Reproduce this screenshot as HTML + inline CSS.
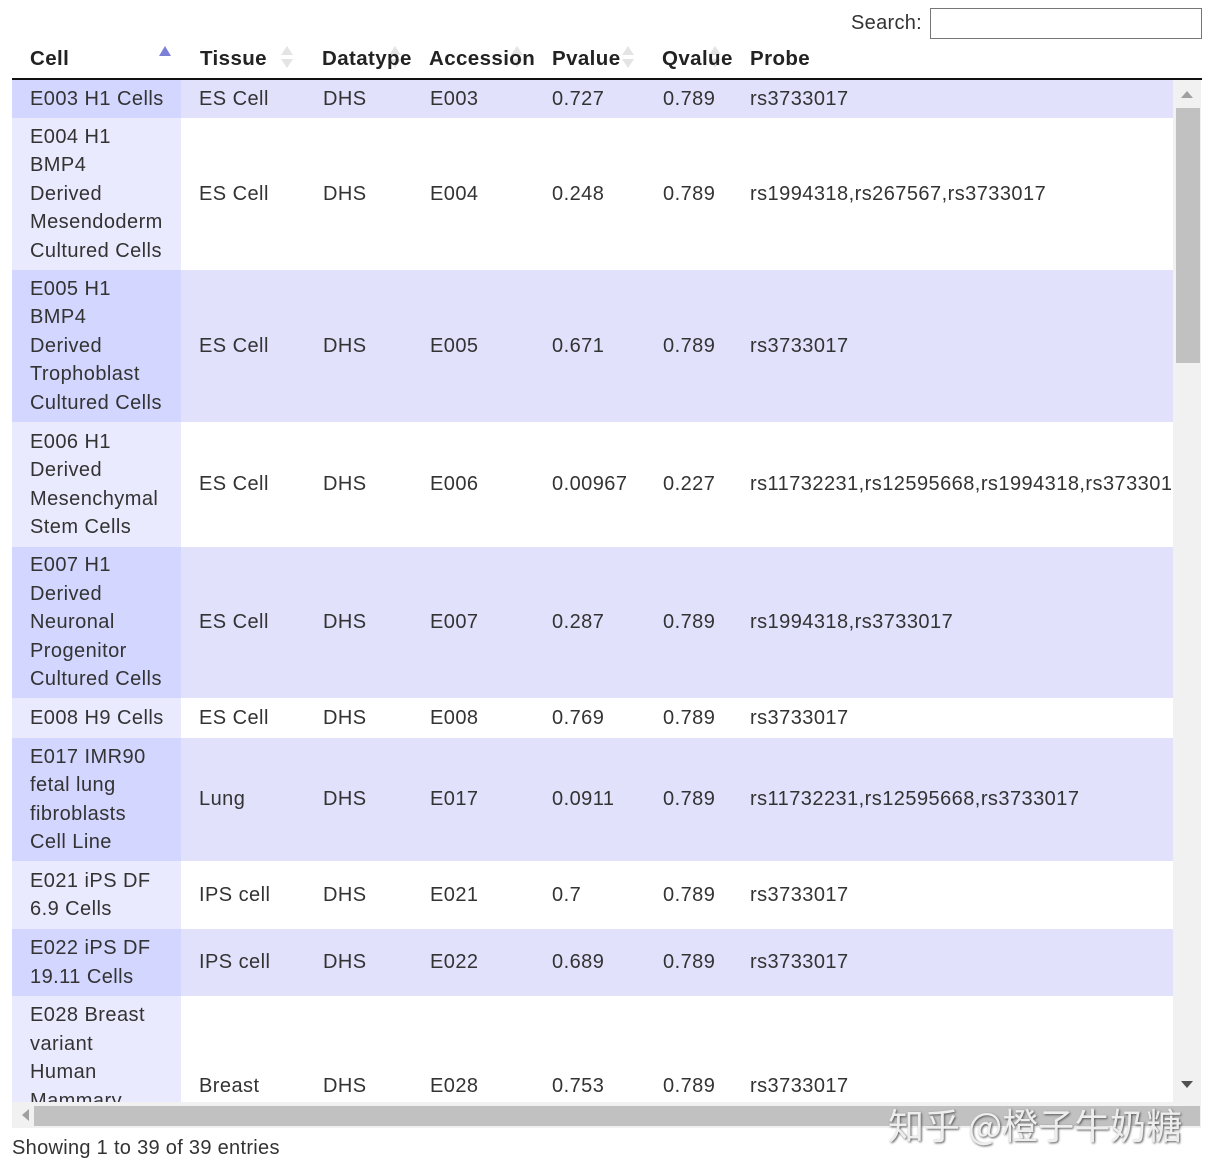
<!DOCTYPE html>
<html><head><meta charset="utf-8"><style>
body{margin:0;width:1217px;height:1171px;background:#fff;font-family:"Liberation Sans",Arial,sans-serif;color:#333;position:relative;overflow:hidden}
.search{position:absolute;left:851px;top:12px;font-size:20px;letter-spacing:0.3px}
.sbox{position:absolute;left:930px;top:8px;width:272px;height:31px;border:1px solid #767676;box-sizing:border-box}
.hdr{position:absolute;top:47px;font-size:20.5px;font-weight:bold;color:#222;letter-spacing:0.4px}
.hline{position:absolute;left:12px;top:78px;width:1190px;height:2px;background:#111}
.wrap{position:absolute;left:12px;top:80px;width:1161px;height:1022px;overflow:hidden}
table{border-collapse:collapse;table-layout:fixed;width:1400px;font-size:20px;line-height:28.5px;letter-spacing:0.45px}
td{padding:0 0 0 18px;vertical-align:middle;white-space:nowrap;overflow:hidden}
tr.o td{background:#e1e1fc}tr.o td.c{background:#d3d6fe}
tr.e td{background:#fff}tr.e td.c{background:#eaeaff}
.vs{position:absolute;left:1173px;top:80px;width:28px;height:1022px;background:#f1f1f1}
.vt{position:absolute;left:1176px;top:108px;width:24px;height:255px;background:#c1c1c1}
.hs{position:absolute;left:12px;top:1102px;width:1189px;height:26px;background:#f1f1f1}
.ht{position:absolute;left:34px;top:1106px;width:1166px;height:20px;background:#c1c1c1}
.foot{position:absolute;left:12px;top:1137px;font-size:20px;letter-spacing:0.3px}
.wm{position:absolute;left:888px;top:1098px;font-size:36px;color:#eee;text-shadow:1px 1px 2px #555;font-family:"Noto Sans CJK SC",sans-serif}
.arr{position:absolute;width:0;height:0;border-left:6px solid transparent;border-right:6px solid transparent}
.su{position:absolute;width:0;height:0;border-left:6px solid transparent;border-right:6px solid transparent;border-bottom:9px solid #e4e4e4}
.sd{position:absolute;width:0;height:0;border-left:6px solid transparent;border-right:6px solid transparent;border-top:9px solid #e4e4e4}
</style></head><body>
<div class="search">Search:</div><div class="sbox"></div>
<div class="hdr" style="left:30px">Cell</div>
<div class="arr" style="left:159px;top:46px;border-bottom:10px solid #7b7fd8"></div>
<div class="su" style="left:281px;top:46px"></div><div class="sd" style="left:281px;top:59px"></div>
<div class="su" style="left:389px;top:46px"></div><div class="sd" style="left:389px;top:59px"></div>
<div class="su" style="left:511px;top:46px"></div><div class="sd" style="left:511px;top:59px"></div>
<div class="su" style="left:622px;top:46px"></div><div class="sd" style="left:622px;top:59px"></div>
<div class="su" style="left:709px;top:46px"></div><div class="sd" style="left:709px;top:59px"></div>
<div class="hdr" style="left:200px">Tissue</div>
<div class="hdr" style="left:322px">Datatype</div>
<div class="hdr" style="left:429px">Accession</div>
<div class="hdr" style="left:552px">Pvalue</div>
<div class="hdr" style="left:662px">Qvalue</div>
<div class="hdr" style="left:750px">Probe</div>
<div class="hline"></div>
<div class="wrap"><table>
<colgroup><col style="width:169px"><col style="width:124px"><col style="width:107px"><col style="width:122px"><col style="width:111px"><col style="width:87px"><col></colgroup>
<tr class="o" style="height:38px"><td class="c">E003 H1 Cells</td><td>ES Cell</td><td>DHS</td><td>E003</td><td>0.727</td><td>0.789</td><td>rs3733017</td></tr>
<tr class="e" style="height:152px"><td class="c">E004 H1<br>BMP4<br>Derived<br>Mesendoderm<br>Cultured Cells</td><td>ES Cell</td><td>DHS</td><td>E004</td><td>0.248</td><td>0.789</td><td>rs1994318,rs267567,rs3733017</td></tr>
<tr class="o" style="height:152px"><td class="c">E005 H1<br>BMP4<br>Derived<br>Trophoblast<br>Cultured Cells</td><td>ES Cell</td><td>DHS</td><td>E005</td><td>0.671</td><td>0.789</td><td>rs3733017</td></tr>
<tr class="e" style="height:125px"><td class="c">E006 H1<br>Derived<br>Mesenchymal<br>Stem Cells</td><td>ES Cell</td><td>DHS</td><td>E006</td><td>0.00967</td><td>0.227</td><td>rs11732231,rs12595668,rs1994318,rs3733017</td></tr>
<tr class="o" style="height:151px"><td class="c">E007 H1<br>Derived<br>Neuronal<br>Progenitor<br>Cultured Cells</td><td>ES Cell</td><td>DHS</td><td>E007</td><td>0.287</td><td>0.789</td><td>rs1994318,rs3733017</td></tr>
<tr class="e" style="height:40px"><td class="c">E008 H9 Cells</td><td>ES Cell</td><td>DHS</td><td>E008</td><td>0.769</td><td>0.789</td><td>rs3733017</td></tr>
<tr class="o" style="height:123px"><td class="c">E017 IMR90<br>fetal lung<br>fibroblasts<br>Cell Line</td><td>Lung</td><td>DHS</td><td>E017</td><td>0.0911</td><td>0.789</td><td>rs11732231,rs12595668,rs3733017</td></tr>
<tr class="e" style="height:68px"><td class="c">E021 iPS DF<br>6.9 Cells</td><td>IPS cell</td><td>DHS</td><td>E021</td><td>0.7</td><td>0.789</td><td>rs3733017</td></tr>
<tr class="o" style="height:67px"><td class="c">E022 iPS DF<br>19.11 Cells</td><td>IPS cell</td><td>DHS</td><td>E022</td><td>0.689</td><td>0.789</td><td>rs3733017</td></tr>
<tr class="e" style="height:180px"><td class="c" style="vertical-align:top;padding-top:5px">E028 Breast<br>variant<br>Human<br>Mammary<br>Epithelial<br>Cells</td><td>Breast</td><td>DHS</td><td>E028</td><td>0.753</td><td>0.789</td><td>rs3733017</td></tr>
</table></div>
<div class="vs"></div><div class="vt"></div>
<div class="arr" style="left:1181px;top:91px;border-bottom:7px solid #a0a0a0"></div>
<div class="arr" style="left:1181px;top:1081px;border-top:7px solid #505050"></div>
<div class="hs"></div><div class="ht"></div>
<div style="position:absolute;left:22px;top:1109px;width:0;height:0;border-top:6px solid transparent;border-bottom:6px solid transparent;border-right:7px solid #a0a0a0"></div>
<div class="foot">Showing 1 to 39 of 39 entries</div>
<div class="wm">知乎 @橙子牛奶糖</div>
</body></html>
